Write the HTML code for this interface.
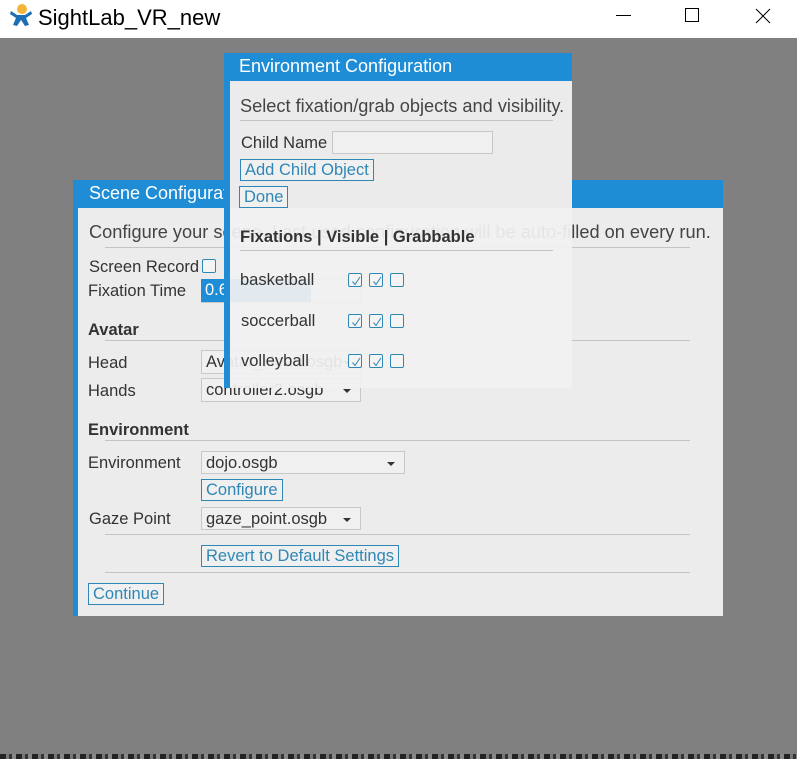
<!DOCTYPE html>
<html><head><meta charset="utf-8"><style>
*{margin:0;padding:0;box-sizing:border-box}
body{width:797px;height:759px;overflow:hidden;background:#808080;font-family:"Liberation Sans",Arial,sans-serif;color:#333;position:relative}
.a{position:absolute;white-space:nowrap}
.tb{left:0;top:0;width:797px;height:38px;background:#fff}
.blue{background:#1f8dd6}
.hr{position:absolute;height:1px;background:#c4c4c4}
.btn{position:absolute;border:1px solid #2f87b5;background:#f0f0f0;color:#2f87b5;font-size:16.5px;line-height:20px;padding:0 4px}
.sel{position:absolute;border:1px solid #c8c8c8;background:#f0f0f0;font-size:16.5px;line-height:22px;padding-left:4px;color:#333}
.sel:after{content:"";position:absolute;right:9px;top:10px;border-left:4px solid transparent;border-right:4px solid transparent;border-top:4px solid #333}
.lab{font-size:16.5px;color:#333}
.cb{position:absolute;width:14px;height:14px;border:1px solid #2f87b5;border-radius:2px;background:#f4f4f4}
.cb svg{position:absolute;left:1px;top:1px}
</style></head><body>
<div class="a tb"></div>
<svg class="a" style="left:8px;top:2px" width="26" height="26" viewBox="0 0 26 26">
<circle cx="14" cy="7" r="5" fill="#f3b43a"/>
<path d="M3 9 L9 13 L13 13 L17 13 L23 9 L24 12 L18 16 L21 23 L17 24 L13 18 L9 24 L5 23 L8 16 L2 12 Z" fill="#1d6fb5"/>
</svg>
<div class="a" style="left:38px;top:5px;font-size:22px;color:#000">SightLab_VR_new</div>
<div class="a" style="left:616px;top:15px;width:15px;height:1px;background:#000"></div>
<div class="a" style="left:685px;top:8px;width:14px;height:14px;border:1px solid #000"></div>
<svg class="a" style="left:755px;top:8px" width="16" height="16"><path d="M1 1L15 15M15 1L1 15" stroke="#000" stroke-width="1"/></svg>

<!-- scene config -->
<div class="a" style="left:73px;top:180px;width:650px;height:436px;background:#ececec"></div>
<div class="a blue" style="left:73px;top:180px;width:650px;height:28px"></div>
<div class="a blue" style="left:73px;top:180px;width:5px;height:436px"></div>
<div class="a" style="left:89px;top:183px;font-size:18px;color:#fff">Scene Configuration</div>
<div class="a" style="left:89px;top:222px;font-size:18.2px;color:#444">Configure your scene. Last used configuration will be auto-filled on every run.</div>
<div class="hr" style="left:105px;top:247px;width:585px"></div>
<div class="a lab" style="left:89px;top:258px">Screen Record</div>
<div class="cb" style="left:202px;top:259px"></div>
<div class="a lab" style="left:88px;top:282px">Fixation Time</div>
<div class="a" style="left:201px;top:279px;width:160px;height:24px;border:1px solid #c8c8c8;background:#f0f0f0"></div>
<div class="a blue" style="left:201px;top:279px;width:110px;height:23px;color:#fff;font-size:16.5px;line-height:23px;padding-left:4px">0.6</div>
<div class="a" style="left:88px;top:321px;font-size:16.5px;font-weight:bold;color:#333">Avatar</div>
<div class="hr" style="left:105px;top:340px;width:585px"></div>
<div class="a lab" style="left:88px;top:354px">Head</div>
<div class="sel" style="left:201px;top:350px;width:160px;height:24px">Avatar_Head.osgb</div>
<div class="a lab" style="left:88px;top:382px">Hands</div>
<div class="sel" style="left:201px;top:378px;width:160px;height:24px">controller2.osgb</div>
<div class="a" style="left:88px;top:421px;font-size:16.5px;font-weight:bold;color:#333">Environment</div>
<div class="hr" style="left:105px;top:440px;width:585px"></div>
<div class="a lab" style="left:88px;top:454px">Environment</div>
<div class="sel" style="left:201px;top:451px;width:204px;height:23px">dojo.osgb</div>
<div class="btn" style="left:201px;top:479px">Configure</div>
<div class="a lab" style="left:89px;top:510px">Gaze Point</div>
<div class="sel" style="left:201px;top:507px;width:160px;height:23px">gaze_point.osgb</div>
<div class="hr" style="left:105px;top:534px;width:585px"></div>
<div class="btn" style="left:201px;top:545px">Revert to Default Settings</div>
<div class="hr" style="left:105px;top:572px;width:585px"></div>
<div class="btn" style="left:88px;top:583px">Continue</div>

<!-- env config -->
<div class="a" style="left:224px;top:53px;width:348px;height:335px;background:rgba(241,241,241,0.93)"></div>
<div class="a" style="left:224px;top:81px;width:348px;height:127px;background:#ebebeb"></div>
<div class="a blue" style="left:224px;top:53px;width:348px;height:28px"></div>
<div class="a blue" style="left:224px;top:53px;width:6px;height:335px"></div>
<div class="a" style="left:239px;top:56px;font-size:18px;color:#fff">Environment Configuration</div>
<div class="a" style="left:240px;top:96px;font-size:18.2px;color:#444">Select fixation/grab objects and visibility.</div>
<div class="hr" style="left:240px;top:120px;width:313px"></div>
<div class="a lab" style="left:241px;top:134px">Child Name</div>
<div class="a" style="left:332px;top:131px;width:161px;height:23px;border:1px solid #c8c8c8;background:#f0f0f0"></div>
<div class="btn" style="left:240px;top:159px">Add Child Object</div>
<div class="btn" style="left:239px;top:186px">Done</div>
<div class="a" style="left:240px;top:228px;font-size:16.5px;font-weight:bold;color:#333">Fixations | Visible | Grabbable</div>
<div class="hr" style="left:240px;top:250px;width:313px"></div>
<div class="a lab" style="left:240px;top:271px">basketball</div>
<div class="a lab" style="left:241px;top:312px">soccerball</div>
<div class="a lab" style="left:241px;top:352px">volleyball</div>
<div class="cb" style="left:348px;top:273px"><svg width="12" height="12"><path d="M2.5 6.5L5 9.5L10 2" stroke="#2f87b5" fill="none"/></svg></div>
<div class="cb" style="left:369px;top:273px"><svg width="12" height="12"><path d="M2.5 6.5L5 9.5L10 2" stroke="#2f87b5" fill="none"/></svg></div>
<div class="cb" style="left:390px;top:273px"></div>
<div class="cb" style="left:348px;top:314px"><svg width="12" height="12"><path d="M2.5 6.5L5 9.5L10 2" stroke="#2f87b5" fill="none"/></svg></div>
<div class="cb" style="left:369px;top:314px"><svg width="12" height="12"><path d="M2.5 6.5L5 9.5L10 2" stroke="#2f87b5" fill="none"/></svg></div>
<div class="cb" style="left:390px;top:314px"></div>
<div class="cb" style="left:348px;top:354px"><svg width="12" height="12"><path d="M2.5 6.5L5 9.5L10 2" stroke="#2f87b5" fill="none"/></svg></div>
<div class="cb" style="left:369px;top:354px"><svg width="12" height="12"><path d="M2.5 6.5L5 9.5L10 2" stroke="#2f87b5" fill="none"/></svg></div>
<div class="cb" style="left:390px;top:354px"></div>

<div class="a" style="left:0;top:754px;width:797px;height:5px;background:repeating-linear-gradient(90deg,#222 0 6px,#777 6px 9px,#333 9px 12px,#888 12px 16px)"></div>
</body></html>
